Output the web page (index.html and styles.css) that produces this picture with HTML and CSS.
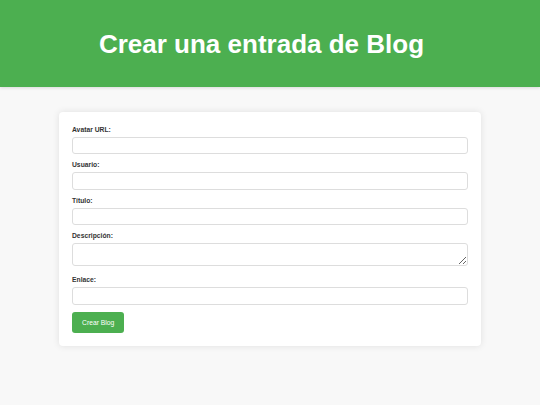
FILE: index.html
```html
<!DOCTYPE html>
<html lang="es">
<head>
<meta charset="utf-8">
<title>Crear una entrada de Blog</title>
<link rel="stylesheet" href="styles.css">
</head>
<body>
<header class="header">
  <h1 class="title">Crear una entrada de Blog</h1>
</header>
<main class="main">
  <form class="card">
    <label class="label" for="avatar">Avatar URL:</label>
    <input class="field" id="avatar" type="text">
    <label class="label" for="usuario">Usuario:</label>
    <input class="field" id="usuario" type="text">
    <label class="label" for="titulo">Título:</label>
    <input class="field" id="titulo" type="text">
    <label class="label" for="descripcion">Descripción:</label>
    <textarea class="field area" id="descripcion"></textarea>
    <label class="label" for="enlace">Enlace:</label>
    <input class="field" id="enlace" type="text">
    <button class="btn" type="button">Crear Blog</button>
  </form>
</main>
</body>
</html>
```

FILE: styles.css
```css
* { box-sizing: border-box; }
html, body { margin: 0; padding: 0; }
body {
  background: #f8f8f8;
  font-family: "Liberation Sans", Arial, Helvetica, sans-serif;
  color: #333;
  min-height: 405px;
}
.header {
  background: #4caf50;
  height: 87px;
  display: flex;
  align-items: center;
  justify-content: center;
  box-shadow: 0 1px 3px rgba(0,0,0,0.12);
}
.title {
  margin: 0;
  padding-right: 17px;
  font-size: 26px;
  line-height: 30px;
  font-weight: bold;
  color: #fff;
}
.main {
  padding-top: 25px;
  display: flex;
  justify-content: center;
}
.card {
  width: 422px;
  background: #fff;
  border-radius: 4px;
  box-shadow: 0 0 7px rgba(0,0,0,0.1);
  padding: 13.5px 13px 13.4px;
  display: flex;
  flex-direction: column;
  align-items: flex-start;
}
.label {
  display: block;
  font-size: 6.75px;
  line-height: 8px;
  font-weight: bold;
  color: #333;
  margin-bottom: 3px;
}
.field {
  display: block;
  width: 100%;
  height: 17.6px;
  margin: 0 0 7px;
  border: 1px solid #ddd;
  border-radius: 3px;
  background: #fff;
  font-family: inherit;
  font-size: 6.75px;
  padding: 3px 5px;
}
.area {
  height: 23px;
  margin-bottom: 9.9px;
  resize: vertical;
}
.btn {
  height: 21px;
  width: 52.4px;
  padding: 0;
  border: none;
  border-radius: 3px;
  background: #4caf50;
  color: #fff;
  font-family: inherit;
  font-size: 6.75px;
  cursor: pointer;
}
```
